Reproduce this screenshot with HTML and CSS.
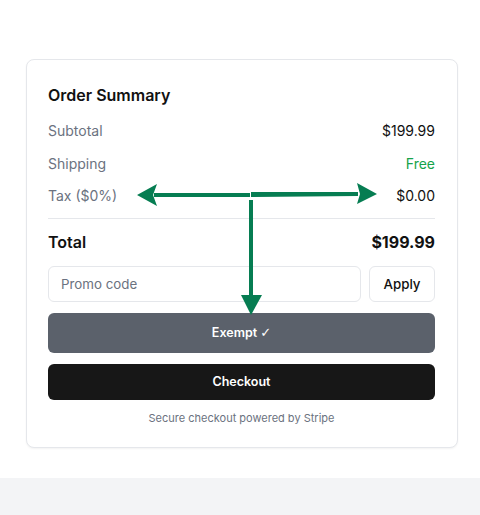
FILE: index.html
```html
<!DOCTYPE html>
<html>
<head>
	<meta charset="utf-8">
	<title>Order Summary</title>
	<link rel="stylesheet" href="styles.css">
</head>
<body>
	<div class="page">
		<div class="card">
			<h2 class="title">Order Summary</h2>

			<div class="rows">
				<div class="row">
					<span class="label">Subtotal</span>
					<span class="value">$199.99</span>
				</div>
				<div class="row">
					<span class="label">Shipping</span>
					<span class="value free">Free</span>
				</div>
				<div class="row">
					<span class="label">Tax ($0%)</span>
					<span class="value">$0.00</span>
				</div>
			</div>

			<div class="row total">
				<span>Total</span>
				<span class="amount">$199.99</span>
			</div>

			<div class="promo">
				<input type="text" placeholder="Promo code">
				<button type="button" class="apply">Apply</button>
			</div>

			<button type="button" class="btn exempt">Exempt <span class="check">✓</span></button>
			<button type="button" class="btn checkout">Checkout</button>

			<p class="secure">Secure checkout powered by Stripe</p>
		</div>
	</div>
	<div class="footer"></div>

	<!-- annotation arrows -->
	<svg class="arrows" width="480" height="515" viewBox="0 0 480 515">
		<g fill="#067d52">
			<rect x="154" y="193" width="96" height="4"/>
			<polygon points="137,195 157,184 153,195 157,206"/>
			<polygon points="251,192 358,192 358,196 251,197"/>
			<polygon points="377,194 357,183 360,194 357,204"/>
			<rect x="249" y="200" width="4" height="97"/>
			<polygon points="241,295 262,295 251,315"/>
		</g>
	</svg>
</body>
</html>
```

FILE: styles.css
```css
body {
	margin: 0;
	font-family: Inter, "Liberation Sans", Arial, sans-serif;
	color: #111111;
	background: #ffffff;
}

h2, p, button, input {margin: 0; font-family: inherit;}

.page {
	padding: 59px 0 30px 26px;
}

/* ----------- card ----------- */
.card {
	width: 432px;
	box-sizing: border-box;
	padding: 23px 22px 21px 21px;
	border: 1px solid #e5e7eb;
	border-radius: 8px;
	background: #fff;
	box-shadow: 0 1px 2px rgba(0, 0, 0, 0.05);
}

.title {
	font-size: 16px;
	font-weight: 600;
	line-height: 24px;
	margin-bottom: 14px;
}

.rows {
	display: flex;
	flex-direction: column;
	gap: 12px;
	padding-bottom: 11px;
	border-bottom: 1px solid #e5e7eb;
}

.row {
	display: flex;
	justify-content: space-between;
	font-size: 14px;
	line-height: 20.5px;
}

.label {color: #6b7280;}
.value {color: #111111;}
.free {color: #16a34a;}

.total {
	margin-top: 11px;
	font-size: 16px;
	font-weight: 600;
	line-height: 24px;
}

.total .amount {font-weight: 700;}

/* ----------- promo ----------- */
.promo {
	display: flex;
	gap: 8px;
	margin-top: 12px;
}

.promo input {
	flex: 1;
	height: 36px;
	box-sizing: border-box;
	padding: 0 12px;
	border: 1px solid #e5e7eb;
	border-radius: 6px;
	font-size: 13.33px;
	color: #111;
	outline: none;
}

.promo input::placeholder {color: #6b7280;}

.apply {
	width: 66px;
	height: 36px;
	border: 1px solid #e5e7eb;
	border-radius: 6px;
	background: #fff;
	font-size: 13.33px;
	font-weight: 500;
	color: #111;
}

/* ----------- buttons ----------- */
.btn {
	display: block;
	width: 100%;
	border: 0;
	border-radius: 6px;
	color: #fff;
	font-size: 12.5px;
	font-weight: 600;
}

.btn .check {
	font-family: "DejaVu Sans", sans-serif;
	font-weight: normal;
	font-size: 13px;
}

.exempt {
	margin-top: 11px;
	height: 40px;
	background: #5b616b;
}

.checkout {
	margin-top: 11px;
	height: 36px;
	background: #171717;
}

.secure {
	margin-top: 10px;
	text-align: center;
	font-size: 11px;
	line-height: 16px;
	color: #6b7280;
}

.footer {
	height: 38px;
	background: #f3f4f6;
}

.arrows {
	position: absolute;
	left: 0;
	top: 0;
	pointer-events: none;
}
```
